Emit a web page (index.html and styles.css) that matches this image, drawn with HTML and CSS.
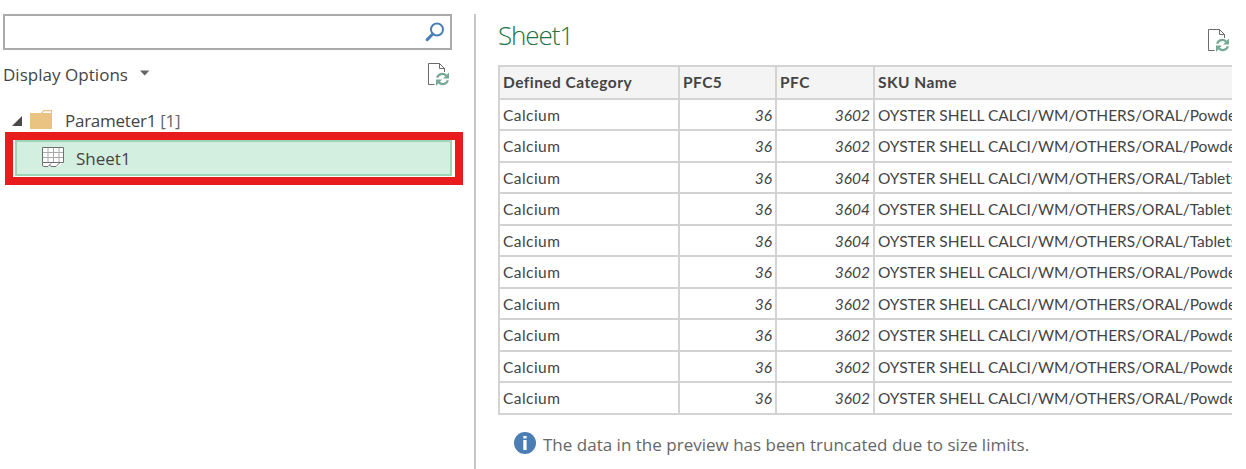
FILE: index.html
```html
<!DOCTYPE html>
<html lang="en">
<head>
<meta charset="utf-8">
<title>Navigator</title>
<link rel="stylesheet" href="styles.css">
</head>
<body>
<svg class="defs" width="0" height="0" aria-hidden="true">
  <symbol id="refresh-doc" viewBox="0 0 22 24">
    <path d="M7.500 22.500H1.500V1.500H12.500L17.500 6.500V10M12.500 1.500V6.500H17.500" fill="none" stroke="#6a6a6a"/>
    <path d="M10.200 15.800A5.200 5.200 0 0 1 19.200 13.800M20.800 18.200A5.200 5.200 0 0 1 11.800 20.200" fill="none" stroke="#77aa96" stroke-width="2.200"/>
    <path d="M22 10.500V16.500H16ZM9 24V17.500H15Z" fill="#77aa96"/>
  </symbol>
</svg>
<main class="navigator">
  <section class="tree-pane">
    <div class="search">
      <svg width="20" height="20" viewBox="0 0 20 20"><circle cx="12" cy="7.500" r="6" fill="none" stroke="#4a7eb8" stroke-width="2"/><path d="M7.800 12L2.200 17.600" stroke="#4a7eb8" stroke-width="3" stroke-linecap="round"/></svg>
    </div>
    <div class="options">
      <span class="options-label">Display Options</span>
      <svg class="caret" width="10" height="6" viewBox="0 0 10 6"><path d="M0 .5H9.400L4.700 5.500Z" fill="#666"/></svg>
      <svg class="refresh" width="22" height="24"><use href="#refresh-doc"/></svg>
    </div>
    <div class="folder">
      <svg class="expander" width="10" height="10" viewBox="0 0 10 10"><path d="M10 0V10H0Z" fill="#4a4a4a"/></svg>
      <svg class="folder-icon" width="22" height="19" viewBox="0 0 22 19"><path d="M0 19V3H11L13.500 0H22V19Z" fill="#eac282"/><path d="M12.500 3L14.300 1.200H21V3Z" fill="#fff"/></svg>
      <span class="folder-label">Parameter1 <span class="count">[1]</span></span>
    </div>
    <div class="highlight">
      <div class="sheet-row">
        <svg class="sheet-icon" width="22" height="20" viewBox="0 0 22 20"><path d="M.5 .5H21.500V15.500L16 19.500H.5Z" fill="#fff"/><path d="M6 1V16M11.500 1V16M17 1V16M1 5.500H21M1 10.500H21" fill="none" stroke="#aaa"/><path d="M.5 .5H21.500V15.500H.5ZM.5 15.500V18Q.5 19.500 2 19.500H6L9 16.500M7.500 18Q8 19.500 10 19.500H14L17.500 16" fill="none" stroke="#707070"/></svg>
        <span class="sheet-label">Sheet1</span>
      </div>
    </div>
  </section>
  <section class="preview-pane">
    <header class="preview-head">
      <h1>Sheet1</h1>
      <svg class="refresh" width="22" height="24"><use href="#refresh-doc"/></svg>
    </header>
    <div class="grid">
      <div class="row head"><div>Defined Category</div><div>PFC5</div><div>PFC</div><div>SKU Name</div></div>
      <div class="row"><div class="cat">Calcium</div><div class="num">36</div><div class="num">3602</div><div class="sku">OYSTER SHELL CALCI/WM/OTHERS/ORAL/Powde</div></div>
      <div class="row"><div class="cat">Calcium</div><div class="num">36</div><div class="num">3602</div><div class="sku">OYSTER SHELL CALCI/WM/OTHERS/ORAL/Powde</div></div>
      <div class="row"><div class="cat">Calcium</div><div class="num">36</div><div class="num">3604</div><div class="sku">OYSTER SHELL CALCI/WM/OTHERS/ORAL/Tablets</div></div>
      <div class="row"><div class="cat">Calcium</div><div class="num">36</div><div class="num">3604</div><div class="sku">OYSTER SHELL CALCI/WM/OTHERS/ORAL/Tablets</div></div>
      <div class="row"><div class="cat">Calcium</div><div class="num">36</div><div class="num">3604</div><div class="sku">OYSTER SHELL CALCI/WM/OTHERS/ORAL/Tablets</div></div>
      <div class="row"><div class="cat">Calcium</div><div class="num">36</div><div class="num">3602</div><div class="sku">OYSTER SHELL CALCI/WM/OTHERS/ORAL/Powde</div></div>
      <div class="row"><div class="cat">Calcium</div><div class="num">36</div><div class="num">3602</div><div class="sku">OYSTER SHELL CALCI/WM/OTHERS/ORAL/Powde</div></div>
      <div class="row"><div class="cat">Calcium</div><div class="num">36</div><div class="num">3602</div><div class="sku">OYSTER SHELL CALCI/WM/OTHERS/ORAL/Powde</div></div>
      <div class="row"><div class="cat">Calcium</div><div class="num">36</div><div class="num">3602</div><div class="sku">OYSTER SHELL CALCI/WM/OTHERS/ORAL/Powde</div></div>
      <div class="row"><div class="cat">Calcium</div><div class="num">36</div><div class="num">3602</div><div class="sku">OYSTER SHELL CALCI/WM/OTHERS/ORAL/Powde</div></div>
    </div>
    <footer class="notice">
      <svg width="22" height="22" viewBox="0 0 22 22"><circle cx="11" cy="11" r="11" fill="#4a7eb4"/><path d="M9.300 4H12.600V6.500H9.300ZM9.300 8H12.600V18H9.300Z" fill="#fff"/></svg>
      <span class="notice-text">The data in the preview has been truncated due to size limits.</span>
    </footer>
  </section>
</main>
</body>
</html>
```
FILE: styles.css
```css
* { box-sizing: border-box; }
body { margin: 0; background: #fff; color: #444; font-family: "Open Sans", "Noto Sans", sans-serif; font-size: 17px; overflow: hidden; }
svg { display: block; flex: none; }
.defs { position: absolute; }
.navigator { display: flex; width: 1246px; height: 469px; padding-top: 14px; }

.tree-pane { width: 476px; flex: none; border-right: 2px solid #c6c6c6; padding-left: 3px; }
.search { width: 449px; height: 36px; border: 2px solid #aaa; display: flex; justify-content: flex-end; padding: 6px 5px 0 0; }
.options { display: flex; align-items: center; width: 449px; height: 48px; }
.options-label { width: 137px; letter-spacing: .03px; white-space: nowrap; }
.options .caret { margin-top: -2px; }
.options .refresh { margin: 0 3px 0 auto; }
.folder { display: flex; align-items: center; height: 34px; padding: 10px 0 0 9px; }
.expander { margin-top: 1px; }
.folder-icon { margin: -2px 13px 0 8px; }
.folder-label { white-space: nowrap; letter-spacing: -.25px; }
.count { color: #666; }
.highlight { width: 458px; height: 53px; border: 8px solid #e81c1c; padding: 0 3px 0 2px; margin-left: 2px; }
.sheet-row { display: flex; align-items: center; height: 36px; border: 2px solid #9fd3b6; background: #d3efe0; padding-left: 25px; gap: 12px; }
.sheet-icon { margin-top: -2px; }

.preview-pane { width: 756px; padding-left: 22px; overflow: hidden; }
.preview-head { display: flex; justify-content: space-between; height: 51px; padding-right: 3px; }
.preview-head .refresh { margin-top: 14px; }
h1 { margin: 2px 0 0; font-size: 26px; line-height: 38px; font-weight: 300; color: #217346; letter-spacing: -1.1px; }
.grid { border-top: 2px solid #d3d3d3; border-left: 2px solid #d3d3d3; font: 15.5px/30px Lato, sans-serif; }
.row { display: grid; grid-template-columns: 180px 97px 98px 358px; height: 31px; }
.row:nth-child(odd) { height: 32px; }
.row.head { height: 33px; background: #f4f4f4; font-weight: 700; line-height: 31px; letter-spacing: .45px; }
.row > div { border-right: 2px solid #d3d3d3; border-bottom: 2px solid #d3d3d3; padding: 0 3px; overflow: hidden; white-space: nowrap; }
.row > div:last-child { border-right: 0; padding-right: 0; }
.row .cat { letter-spacing: .45px; }
.num { text-align: right; font-style: italic; }
.notice { display: flex; gap: 7px; padding: 17px 0 0 16px; color: #666; }
.notice-text { line-height: 26px; letter-spacing: .01px; white-space: nowrap; }
```
